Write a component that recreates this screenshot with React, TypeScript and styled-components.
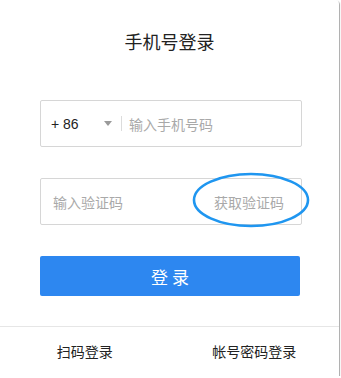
import * as React from 'react';
import styled, { createGlobalStyle } from 'styled-components';

const Global = createGlobalStyle`
  body {
    margin: 0;
    background: #fff;
    font-family: "Noto Sans CJK SC", "Liberation Sans", sans-serif;
  }
`;

const Card = styled.div`
  width: 339px;
  height: 376px;
  background: #fff;
  border-top-right-radius: 4px;
  box-shadow: 1px 1px 1px #a9a9a9;
  display: flex;
  flex-direction: column;
`;

const Title = styled.h1`
  margin: 0;
  padding-top: 29px;
  font-size: 18px;
  line-height: 24px;
  font-weight: 400;
  color: #222;
  text-align: center;
`;

const Form = styled.div`
  padding: 47px 37px 0 40px;
  display: flex;
  flex-direction: column;
  gap: 31px;
`;

const Field = styled.div`
  position: relative;
  height: 47px;
  box-sizing: border-box;
  border: 1px solid #d6d6d6;
  border-radius: 2px;
  display: flex;
  align-items: center;
  font-size: 14px;
`;

const Code = styled.span`
  font-family: "Liberation Sans", sans-serif;
  color: #222;
  margin-left: 10px;
  width: 53px;
`;

const Caret = styled.span`
  width: 0;
  height: 0;
  border-left: 4px solid transparent;
  border-right: 4px solid transparent;
  border-top: 5px solid #9a9a9a;
`;

const Divider = styled.span`
  width: 1px;
  height: 15px;
  background: #dcdcdc;
  margin: 0 7px 0 9px;
`;

const Placeholder = styled.span<{ $pad?: number }>`
  color: #a9a9a9;
  padding-left: ${(p) => p.$pad ?? 0}px;
  flex: 1;
`;

const SendCode = styled.span`
  color: #a9a9a9;
  padding-right: 17px;
`;

const Circle = styled.svg`
  position: absolute;
  left: 151px;
  top: -7px;
`;

const Submit = styled.button`
  height: 40px;
  margin-right: 2px;
  border: none;
  border-radius: 2px;
  background: #2d87f0;
  color: #fff;
  font-family: inherit;
  font-size: 17px;
  letter-spacing: 4px;
  text-indent: 4px;
`;

const Footer = styled.div`
  margin-top: 30px;
  border-top: 1px solid #e6e6e6;
  flex: 1;
  display: flex;
  align-items: center;
  padding-bottom: 1px;
`;

const FooterLink = styled.span`
  flex: 1;
  text-align: center;
  font-size: 14px;
  color: #222;
`;

export default function App() {
  return (
    <>
      <Global />
      <Card>
        <Title>手机号登录</Title>
        <Form>
          <Field>
            <Code>+ 86</Code>
            <Caret />
            <Divider />
            <Placeholder>输入手机号码</Placeholder>
          </Field>
          <Field>
            <Placeholder $pad={12}>输入验证码</Placeholder>
            <SendCode>获取验证码</SendCode>
            <Circle width="118" height="56" viewBox="0 0 118 56">
              <ellipse cx="59" cy="28" rx="57" ry="26" fill="none" stroke="#1f96f0" strokeWidth="2.6" />
            </Circle>
          </Field>
          <Submit>登录</Submit>
        </Form>
        <Footer>
          <FooterLink>扫码登录</FooterLink>
          <FooterLink>帐号密码登录</FooterLink>
        </Footer>
      </Card>
    </>
  );
}
